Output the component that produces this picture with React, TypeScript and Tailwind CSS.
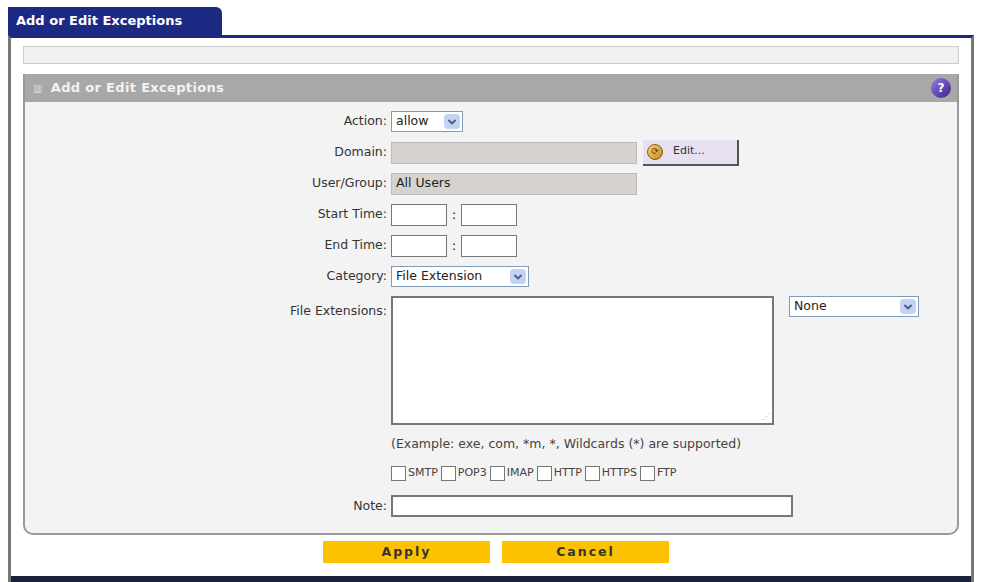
import { ChevronDown } from 'lucide-react';

const font = { fontFamily: '"DejaVu Sans", Verdana, sans-serif' };

function Select({ value, width }: { value: string; width: string }) {
  return (
    <div className={`flex h-[21px] items-center justify-between border border-[#7f9db9] bg-white pl-1 pr-[2px] text-[12.5px] text-[#222] ${width}`}>
      <span>{value}</span>
      <span className="flex h-[15px] w-[16px] items-center justify-center rounded-sm bg-[#c3d3f5]">
        <ChevronDown className="h-3 w-3 text-[#4d6185]" strokeWidth={4} />
      </span>
    </div>
  );
}

function Row({ label, children, h = 'h-[31px]' }: { label?: string; children: React.ReactNode; h?: string }) {
  return (
    <div className={`flex items-center ${h}`}>
      <div className="w-[366px] pr-[4px] text-right text-[12.5px] text-[#333]">{label ? `${label}:` : ''}</div>
      <div className="flex items-center">{children}</div>
    </div>
  );
}

const box = 'h-[22px] border border-[#777] bg-white';

export default function App() {
  return (
    <div className="h-[582px] w-[982px] bg-white" style={font}>
      <div className="flex h-full flex-col px-[8px] pt-[7px]">
        <div className="flex">
          <div className="flex h-[28px] w-[214px] items-center rounded-tr-[6px] bg-[#1c2a84] px-[8px] text-[13px] font-bold text-white">
            Add or Edit Exceptions
          </div>
        </div>
        <div className="flex flex-1 flex-col border-x-[3px] border-t-[3px] border-[#1c2a84] border-x-[#777] bg-white">
          <div className="mx-[12px] mt-[8px] h-[18px] border border-[#ccc] bg-[#f0f0f0]" />
          <div className="mx-[12px] mt-[10px] flex flex-col rounded-b-[10px] border-x-2 border-b-2 border-[#999] bg-[#f3f3f3]">
            <div className="flex h-[28px] items-center justify-between bg-[#a8a8a8] pl-[8px] pr-[6px]">
              <div className="flex items-center gap-[8px] text-[13px] font-bold tracking-wide text-[#f2f2f2]">
                <span className="text-[10px] text-[#ddd]">▥</span>
                Add or Edit Exceptions
              </div>
              <div className="flex h-[20px] w-[20px] items-center justify-center rounded-full bg-gradient-to-br from-[#9a7be0] to-[#3a1f8f] text-[12px] font-bold text-white">?</div>
            </div>
            <div className="pb-[8px] pt-[4px]">
              <Row label="Action"><Select value="allow" width="w-[72px]" /></Row>
              <Row label="Domain">
                <div className="h-[22px] w-[246px] border border-[#bbb] bg-[#d6d3ce]" />
                <div className="ml-[6px] flex h-[26px] w-[96px] items-center gap-[10px] border-b-2 border-r-2 border-[#555] bg-[#e6e0f0] pl-[4px] text-[11px] text-[#333]">
                  <span className="flex h-[16px] w-[16px] items-center justify-center rounded-full border border-[#8a5a00] bg-gradient-to-br from-[#f7d27a] to-[#c68a1c] text-[9px] text-[#6a3b00]">⟳</span>
                  Edit...
                </div>
              </Row>
              <Row label="User/Group">
                <div className="flex h-[22px] w-[246px] items-center border border-[#bbb] bg-[#d6d3ce] pl-1 text-[12.5px] text-[#222]">All Users</div>
              </Row>
              <Row label="Start Time">
                <div className={`${box} w-[56px]`} /><span className="mx-[5px] text-[12px]">:</span><div className={`${box} w-[56px]`} />
              </Row>
              <Row label="End Time">
                <div className={`${box} w-[56px]`} /><span className="mx-[5px] text-[12px]">:</span><div className={`${box} w-[56px]`} />
              </Row>
              <Row label="Category"><Select value="File Extension" width="w-[138px]" /></Row>
              <div className="flex pt-[4px]">
                <div className="w-[366px] pr-[4px] pt-[6px] text-right text-[12.5px] text-[#333]">File Extensions:</div>
                <div className="relative h-[129px] w-[383px] border-2 border-[#777] bg-white">
                  <span className="absolute bottom-0 right-[2px] text-[8px] text-[#aaa]">⋰</span>
                </div>
                <div className="ml-[15px]"><Select value="None" width="w-[130px]" /></div>
              </div>
              <Row label="" h="h-[34px]">
                <span className="pt-[4px] text-[12.5px] text-[#444]">(Example: exe, com, *m, *, Wildcards (*) are supported)</span>
              </Row>
              <Row label="" h="h-[28px]">
                {['SMTP', 'POP3', 'IMAP', 'HTTP', 'HTTPS', 'FTP'].map((p) => (
                  <span key={p} className="mr-[3px] flex items-center text-[11px] text-[#444]">
                    <span className="mr-[2px] h-[15px] w-[15px] border border-[#777] bg-white" />
                    {p}
                  </span>
                ))}
              </Row>
              <Row label="Note" h="h-[38px]">
                <div className="h-[22px] w-[402px] border-2 border-[#777] bg-white" />
              </Row>
            </div>
          </div>
          <div className="flex justify-center gap-[12px] pl-[10px] pt-[6px]">
            <div className="flex h-[22px] w-[167px] items-center justify-center bg-[#fcc200] text-[12.5px] font-bold tracking-[2px] text-[#333]">Apply</div>
            <div className="flex h-[22px] w-[167px] items-center justify-center bg-[#fcc200] text-[12.5px] font-bold tracking-[2px] text-[#333]">Cancel</div>
          </div>
          <div className="flex-1" />
          <div className="h-[6px] bg-[#1a1f3a]" />
        </div>
      </div>
    </div>
  );
}
